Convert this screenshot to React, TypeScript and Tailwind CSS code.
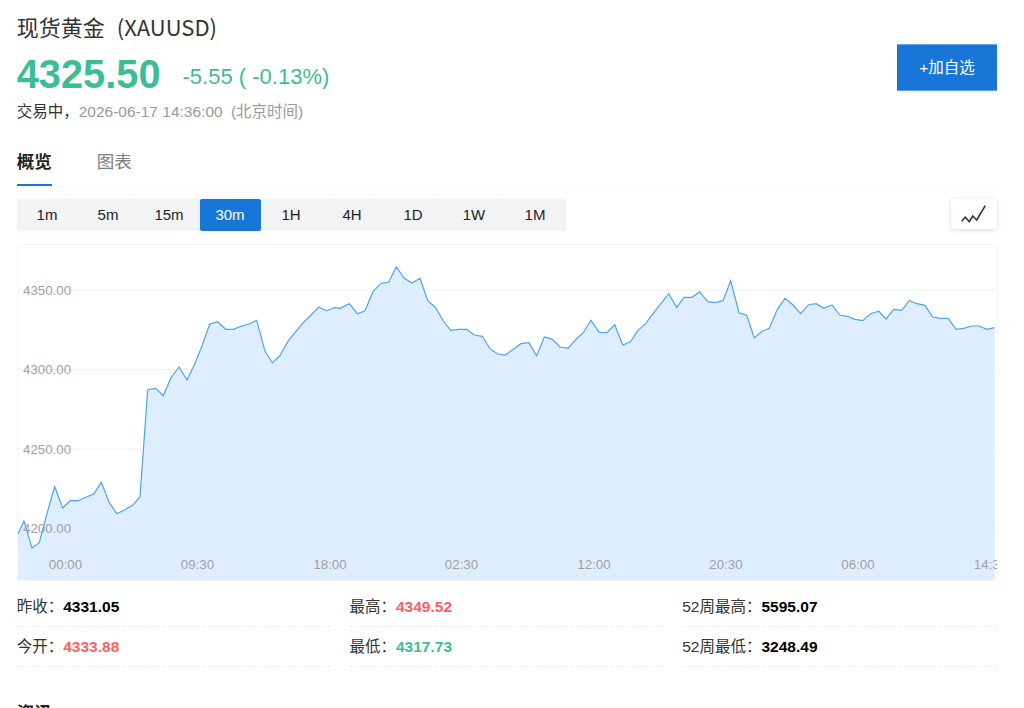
const seg1 = [[51,888],[72,843],[96,924],[118,908],[141,820],[164,740],[188,804],[211,782],[235,782],[258,772],[281,762],[304,727],[328,788],[351,821],[374,809],[398,796],[420,770],[443,449],[467,445],[490,467],[513,413],[537,381],[561,420],[584,372],[607,315],[629,253],[653,245],[677,268],[700,268],[723,259],[747,252],[770,241],[795,334],[817,368],[839,348],[864,304],[887,275],[910,248],[933,225],[956,202],[980,212],[1003,203]]
const seg2 = [[0,205],[28,191],[52,221],[75,212],[99,155],[122,131],[146,126],[169,81],[193,115],[216,129],[240,115],[263,182],[287,203],[310,243],[332,271],[356,268],[380,268],[403,285],[427,289],[450,326],[473,342],[496,345],[520,328],[543,311],[567,308],[590,348],[613,291],[637,298],[660,321],[684,325],[707,299],[730,278],[753,241],[778,277],[801,278],[824,254],[848,315],[871,306],[894,271],[917,251],[940,220],[963,190],[986,161],[1010,202]]
const seg3 = [[12,172],[36,172],[59,155],[83,185],[106,188],[129,182],[152,122],[177,218],[200,226],[223,294],[246,274],[268,265],[292,208],[315,175],[339,195],[362,221],[386,194],[409,191],[432,205],[456,195],[479,225],[502,229],[525,238],[548,242],[572,221],[596,214],[618,237],[641,208],[665,211],[688,182],[711,191],[735,196],[758,231],[781,235],[805,235],[828,268],[851,265],[874,258],[897,258],[920,268],[944,263]]

const toPage = (pts: number[][], dx: number) =>
  pts.map(([x, y]) => `${(x / 3 + dx).toFixed(1)},${(y / 3 + 240).toFixed(1)}`)

const line = [...toPage(seg1, 0), ...toPage(seg2, 340), ...toPage(seg3, 680)]

const ranges = ["1m", "5m", "15m", "30m", "1H", "4H", "1D", "1W", "1M"]
const gridLines = [
  { y: 290, label: "4350.00" },
  { y: 369.5, label: "4300.00" },
  { y: 449, label: "4250.00" },
  { y: 528, label: "4200.00" },
]
const times = [
  { x: 65.5, label: "00:00" },
  { x: 197.5, label: "09:30" },
  { x: 330, label: "18:00" },
  { x: 461.5, label: "02:30" },
  { x: 594, label: "12:00" },
  { x: 726, label: "20:30" },
  { x: 858, label: "06:00" },
  { x: 990.5, label: "14:36" },
]

const stats = [
  { label: "昨收", value: "4331.05", color: "text-black" },
  { label: "最高", value: "4349.52", color: "text-[#ff5f5f]" },
  { label: "52周最高", value: "5595.07", color: "text-black" },
  { label: "今开", value: "4333.88", color: "text-[#ff5f5f]" },
  { label: "最低", value: "4317.73", color: "text-[#3dbd96]" },
  { label: "52周最低", value: "3248.49", color: "text-black" },
]

export default function App() {
  return (
    <div className="h-[708px] w-[1024px] overflow-hidden bg-white pl-[16.7px] font-['Liberation_Sans','Noto_Sans_CJK_SC',sans-serif] text-[#222]">
      {/* Quote header */}
      <div className="flex h-[127px] w-[980.3px] items-start justify-between">
        <div>
          <h1 className="mt-[9px] h-[34px] font-['Noto_Sans_CJK_SC',sans-serif] text-[22px] leading-[34px] text-[#333]">
            现货黄金<span className="ml-[12px]">(XAUUSD)</span>
          </h1>
          <div className="mt-[12px] flex h-[40px] items-center text-[#3dbd96]">
            <span className="text-[39.8px] leading-none font-bold">4325.50</span>
            <span className="mt-[2px] ml-[22px] text-[22px]">-5.55 ( -0.13%)</span>
          </div>
          <p className="mt-[5px] h-[24px] text-[15.5px] leading-[24px] text-[#999]">
            <span className="text-[#333]">交易中，</span>2026-06-17 14:36:00 <span className="ml-[4px]">(北京时间)</span>
          </p>
        </div>
        <button className="mt-[44px] h-[47px] w-[100px] border-y border-[#64a5ea] bg-[#1976d9] text-[15.5px] text-white">
          +加自选
        </button>
      </div>

      {/* Tabs */}
      <div className="flex h-[60px] w-[981px] border-b border-[#f7f7f7] pt-[23px]">
        <div className="h-[36px] w-[35px] border-b-2 border-[#1976d9] text-[17.5px] leading-[24px] font-bold text-[#222]">概览</div>
        <div className="ml-[45px] text-[17.5px] leading-[24px] text-[#808080]">图表</div>
      </div>

      {/* Range picker */}
      <div className="mt-[12px] flex h-[33px] w-[980.3px] justify-between">
        <div className="-ml-[0.2px] flex">
          {ranges.map((r) => (
            <div
              key={r}
              className={
                r === "30m"
                  ? "flex h-[32px] w-[61px] items-center justify-center rounded-[2px] bg-[#1976d9] text-[15px] text-white"
                  : "flex h-[32px] w-[61px] items-center justify-center rounded-[2px] bg-[#f2f3f5] text-[15px] text-[#222]"
              }
            >
              {r}
            </div>
          ))}
        </div>
        <div className="flex h-[30px] w-[46px] items-center justify-center rounded-[2px] bg-white shadow-[0_1px_4px_rgba(60,80,130,0.22)]">
          <svg width="46" height="30" viewBox="0 0 46 30" fill="none">
            <polyline points="10.7,22.3 14.3,18.3 18.3,22.7 21.7,17 25.7,21 34.3,6.7" stroke="#333" strokeWidth="1.6" />
          </svg>
        </div>
      </div>

      {/* Chart */}
      <div className="mt-[12px] h-[337px] w-[981.3px] border border-[#f5f5f5]">
        <svg width="979" height="335" viewBox="18 245 979 335" className="block overflow-hidden">
          {gridLines.map((g) => (
            <line key={g.y} x1="18" x2="997" y1={g.y} y2={g.y} stroke="#f0f0f0" />
          ))}
          <polygon points={`17,580 ${line.join(" ")} 994.7,580`} fill="#dfeeff" />
          <polyline points={line.join(" ")} fill="none" stroke="#4ba3f5" strokeWidth="1.2" />
          {gridLines.map((g) => (
            <text key={g.label} x="23" y={g.y + 4.5} fontSize="13.3" fill="#a0a0a0">{g.label}</text>
          ))}
          {times.map((t) => (
            <text key={t.label} x={t.x} y="569" fontSize="13.3" fill="#a0a0a0" textAnchor="middle">{t.label}</text>
          ))}
        </svg>
      </div>

      {/* Stats */}
      <div className="mt-[6px] grid w-[980.3px] grid-cols-3 gap-x-[18px]">
        {stats.map((s) => (
          <div key={s.label} className="flex h-[40px] items-center border-b border-dashed border-[#eaeaea] pb-[0.5px] text-[15.5px] text-[#333]">
            <span>{s.label}：</span>
            <span className={`font-bold ${s.color}`}>{s.value}</span>
          </div>
        ))}
      </div>

      <h2 className="mt-[34px] text-[17.5px] leading-[24px] font-bold text-[#222]">资讯</h2>
    </div>
  )
}
